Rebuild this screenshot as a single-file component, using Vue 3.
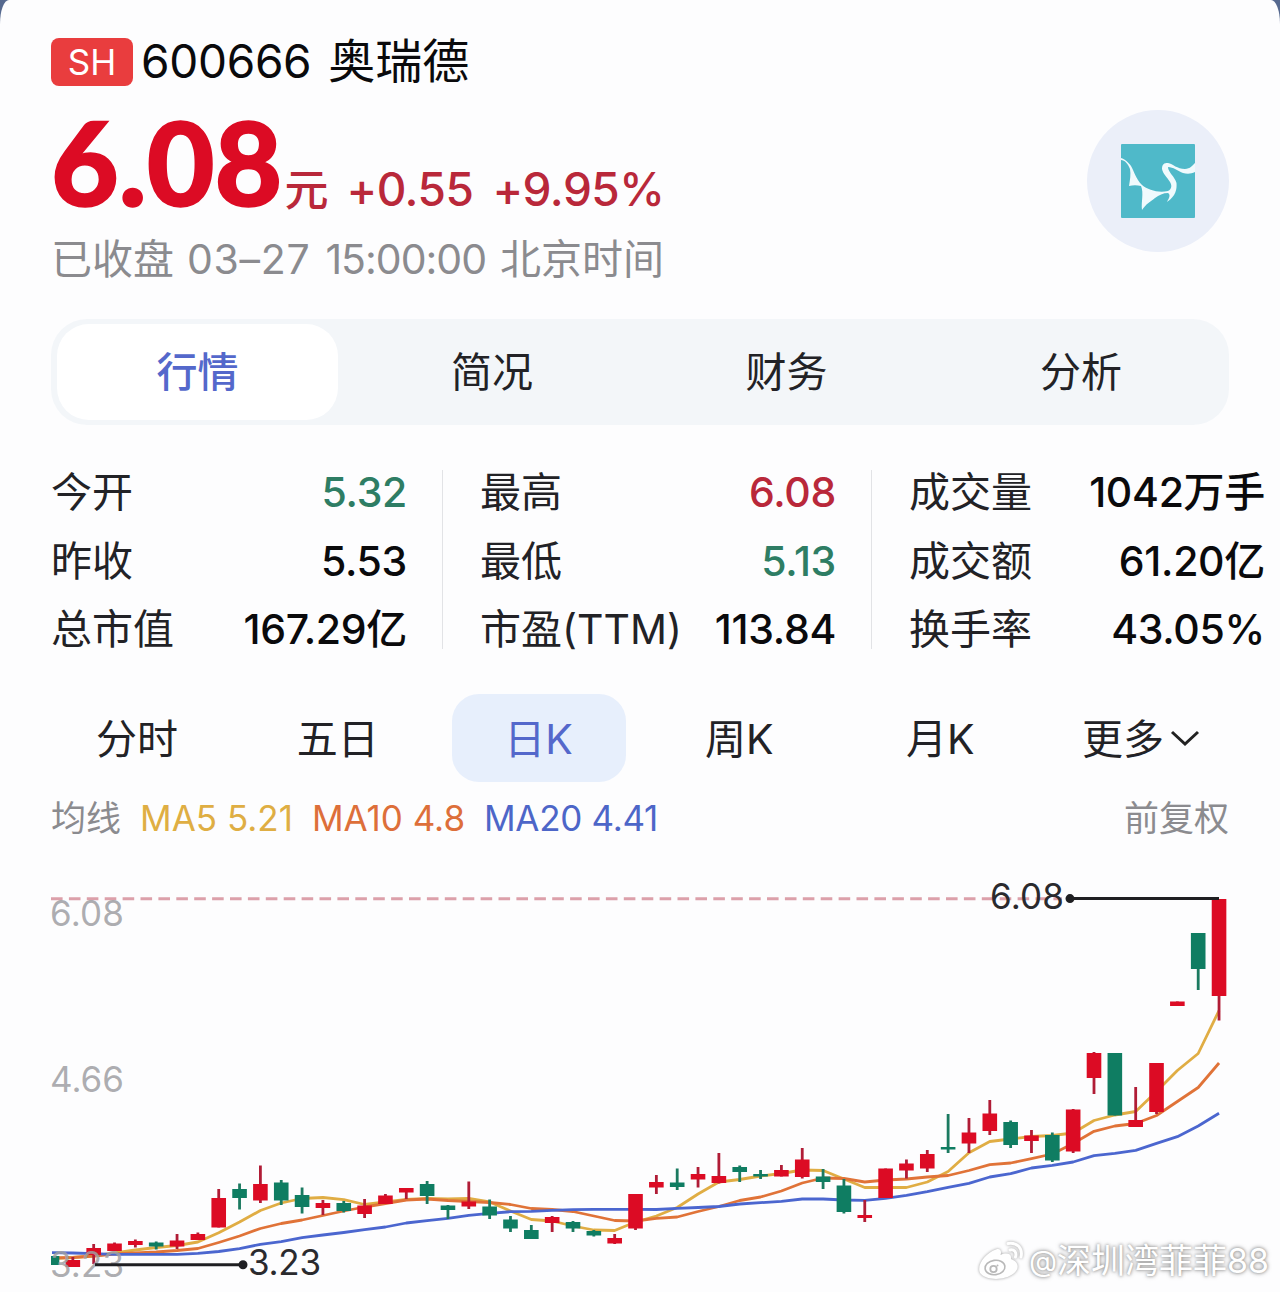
<template>
  <div class="page">
    <header class="header">
      <div class="info">
        <div class="name-row">
          <span class="badge">SH</span>
          <span class="code">600666</span>
          <span class="name">奥瑞德</span>
        </div>
        <div class="price-row">
          <span class="price">6.08</span>
          <span class="unit">元</span>
          <span class="change">+0.55</span>
          <span class="percent">+9.95%</span>
        </div>
        <div class="time-row">
          <span>已收盘</span>
          <span class="date">03–27</span>
          <span class="clock">15:00:00</span>
          <span>北京时间</span>
        </div>
      </div>
      <div class="logo">
        <svg width="74" height="74" viewBox="0 0 74 74">
          <rect width="74" height="74" rx="1" fill="#4fb9c9" />
          <path
            fill="#f0fafd"
            d="M0 14 C4 15 8 19 10 22 C13 27 15 35 21 41 C27 46 37 49 47 47 C51 45 51 41 49 38 C46 33 42 30 41 25 C41 20 43 19 47 19 C52 20 56 25 64 25 C69 25 72 21 74 19 V28 C70 30 66 30 62 29 C57 27 52 23 47 23 C47 28 54 33 55.5 39 C56 45 55 52 46 58 C48 54 50 51 47 49 C42 49 38 51 34 54 C29 58 25 60 21 66 C20 58 23 49 20 42 C16 41 12 41 8 42 C9 36 10 30 9 25 C7 20 4 16 0 16 Z"
          />
        </svg>
      </div>
    </header>

    <nav class="tabs">
      <button
        v-for="t in tabs"
        :key="t"
        class="tab"
        :class="{ active: t === tab }"
        @click="tab = t"
      >{{ t }}</button>
    </nav>

    <section class="stats">
      <div v-for="(col, i) in stats" :key="i" class="stats-col">
        <div v-for="s in col" :key="s.label" class="stat">
          <span class="label">{{ s.label }}</span>
          <span class="value" :class="s.trend">{{ s.value }}</span>
        </div>
      </div>
    </section>

    <nav class="periods">
      <button
        v-for="p in periods"
        :key="p"
        class="period"
        :class="{ active: p === period }"
        @click="period = p"
      >
        {{ p }}<svg v-if="p === '更多'" class="arrow" width="30" height="20" viewBox="0 0 30 20">
          <path d="M2 4 L15 16 L28 4" fill="none" stroke="#222" stroke-width="3" />
        </svg>
      </button>
    </nav>

    <div class="ma-row">
      <span class="gray">均线</span>
      <span class="ma ma5">MA5 5.21</span>
      <span class="ma ma10">MA10 4.8</span>
      <span class="ma ma20">MA20 4.41</span>
      <span class="gray adjust">前复权</span>
    </div>

    <div class="chart">
      <svg width="1280" height="432" viewBox="0 860 1280 432">
        <defs>
          <clipPath id="plot"><rect x="51" y="860" width="1180" height="432" /></clipPath>
        </defs>
        <line x1="51" x2="1062" y1="898.7" y2="898.7" stroke="#dca0aa" stroke-width="3" stroke-dasharray="11.6 6.3" />
        <g clip-path="url(#plot)">
          <polyline v-for="l in lines" :key="l.color" :points="toPoints(l.data)" fill="none" :stroke="l.color" stroke-width="2.8" stroke-linejoin="round" />
          <g v-for="(c, i) in candles" :key="i" :fill="c[0] ? '#dc0b24' : '#0f7d62'">
            <rect :x="cx(i) - 1.4" :y="c[1]" width="2.8" :height="c[4] - c[1]" :fill="c[0] ? '#b01c36' : '#1b7a60'" />
            <rect :x="cx(i) - 7.3" :y="c[2]" width="14.6" :height="c[3] - c[2]" />
          </g>
        </g>
        <g class="axis">
          <text x="50" y="925.5" textLength="74">6.08</text>
          <text x="50" y="1091.5" textLength="74">4.66</text>
          <text x="50" y="1277" textLength="74">3.23</text>
        </g>
        <g stroke="#1f1f22" stroke-width="3" fill="#1f1f22">
          <line x1="1070" x2="1219" y1="898.6" y2="898.6" />
          <circle cx="1070" cy="898.6" r="3" />
          <line x1="95" x2="243" y1="1264.8" y2="1264.8" />
          <circle cx="243" cy="1264.8" r="3" />
        </g>
        <g class="mark">
          <text x="990" y="909" textLength="74">6.08</text>
          <text x="248" y="1275" textLength="73">3.23</text>
        </g>
      </svg>

      <div class="watermark">
        <svg width="48" height="42" viewBox="0 0 48 42">
          <path fill="#fff" d="M19 9.5 C23 8 25 11 23.5 15 C29 12.5 35 13 34 19 C42 22 43 29 36 34 C28 40 11 41 4 34 C-2 27 8 13 19 9.5 Z" />
          <ellipse cx="18" cy="27.5" rx="10" ry="7.2" fill="#fff" stroke="#b9b9b9" stroke-width="1.6" transform="rotate(-8 18 27.5)" />
          <circle cx="16.5" cy="29" r="3.2" fill="#fff" stroke="#b9b9b9" stroke-width="1.8" />
          <circle cx="20.5" cy="25.5" r="1" fill="#b9b9b9" />
          <path d="M33 10 C37 9 40 12 38.5 17 M31 3.5 C40 2 46 8 44 17" fill="none" stroke="#fff" stroke-width="3" stroke-linecap="round" />
        </svg>
        <span class="at">@</span><span>深圳湾菲菲88</span>
      </div>
    </div>
  </div>
</template>

<script setup>
import { ref } from "vue";

const tabs = ["行情", "简况", "财务", "分析"];
const tab = ref("行情");

const periods = ["分时", "五日", "日K", "周K", "月K", "更多"];
const period = ref("日K");

const stats = [
  [
    { label: "今开", value: "5.32", trend: "down" },
    { label: "昨收", value: "5.53" },
    { label: "总市值", value: "167.29亿" },
  ],
  [
    { label: "最高", value: "6.08", trend: "up" },
    { label: "最低", value: "5.13", trend: "down" },
    { label: "市盈(TTM)", value: "113.84" },
  ],
  [
    { label: "成交量", value: "1042万手" },
    { label: "成交额", value: "61.20亿" },
    { label: "换手率", value: "43.05%" },
  ],
];

// [rising, high, body top, body bottom, low]
const candles = [
  [0, 1256, 1256, 1265, 1265],
  [1, 1257, 1260, 1267, 1267],
  [1, 1244, 1248, 1255, 1264],
  [1, 1242.5, 1243.5, 1251, 1251],
  [1, 1239.5, 1241, 1245, 1247.5],
  [0, 1241.5, 1242.5, 1246.5, 1249.5],
  [1, 1234, 1240.5, 1246.5, 1249],
  [1, 1232.5, 1234, 1240, 1240],
  [1, 1189, 1198, 1227.5, 1227.5],
  [0, 1183.5, 1189, 1198, 1209.5],
  [1, 1165.5, 1184, 1200.5, 1203],
  [0, 1180, 1182.5, 1200.5, 1205],
  [0, 1187.5, 1195, 1207, 1213.5],
  [1, 1200, 1203, 1208, 1215],
  [0, 1201, 1203, 1211, 1212.5],
  [1, 1199, 1205.5, 1214, 1218],
  [1, 1194, 1195.5, 1204, 1204],
  [1, 1188, 1188, 1192.5, 1199],
  [0, 1181, 1184, 1196, 1204],
  [0, 1205, 1205.5, 1210, 1219],
  [1, 1181.5, 1201.5, 1206.5, 1209],
  [0, 1199.5, 1206.5, 1215.5, 1219],
  [0, 1216, 1219.5, 1228.5, 1232],
  [0, 1225, 1230, 1239, 1239],
  [1, 1216, 1217, 1223, 1232],
  [0, 1221, 1222, 1228.5, 1232],
  [0, 1230, 1231, 1235.5, 1236.5],
  [1, 1234, 1238, 1243.5, 1244],
  [1, 1194, 1194, 1228.5, 1230],
  [1, 1175, 1182, 1187.5, 1194],
  [0, 1168.5, 1182.5, 1187, 1190],
  [1, 1167, 1174, 1179.5, 1187.5],
  [1, 1153, 1176, 1183, 1183.5],
  [0, 1165.5, 1167, 1172, 1182],
  [0, 1170, 1174, 1176.5, 1179],
  [1, 1165, 1170, 1176.5, 1176.5],
  [1, 1148, 1159.5, 1177, 1178.5],
  [0, 1169, 1176.5, 1182, 1189],
  [0, 1179, 1185.5, 1212, 1213.5],
  [1, 1200, 1215, 1218, 1222],
  [1, 1168.5, 1168.5, 1198, 1198],
  [1, 1159.5, 1163.5, 1170.5, 1178.5],
  [1, 1150, 1154, 1168.5, 1172],
  [0, 1114, 1147, 1149.5, 1153],
  [1, 1118, 1132.5, 1143.5, 1153],
  [1, 1100, 1113.5, 1131, 1135],
  [0, 1120.5, 1122, 1145, 1148],
  [1, 1130, 1135.5, 1141, 1153],
  [0, 1132.5, 1135, 1160.5, 1162],
  [1, 1109, 1109.5, 1151.5, 1153],
  [1, 1052, 1053, 1078, 1094],
  [0, 1053, 1053, 1115.5, 1115.5],
  [1, 1087, 1120, 1127, 1127],
  [1, 1063, 1063, 1112, 1114],
  [1, 1001.5, 1001.5, 1006, 1006],
  [0, 933, 933, 969, 990],
  [1, 899, 899, 996, 1020.5],
];

const lines = [
  {
    color: "#e0ad44",
    data: [
      1258.5, 1257.5, 1256, 1253, 1250, 1247.5, 1245.5, 1242, 1232.7, 1222, 1210.5, 1203, 1198.5, 1197.5, 1199.7,
      1204.5, 1202, 1199.5, 1198.5, 1198.8, 1198.3, 1202, 1211, 1219.5, 1221, 1226, 1230, 1230.5, 1222, 1216,
      1207.5, 1194, 1182, 1179.5, 1176, 1173.5, 1170, 1170.5, 1179, 1187.5, 1187.5, 1187.5, 1182, 1171.5, 1152.7,
      1141.5, 1139, 1136.5, 1135.5, 1133, 1120.5, 1115, 1111.5, 1091.5, 1070.5, 1053.5, 1010.5,
    ],
  },
  {
    color: "#e07338",
    data: [
      1258, 1257.5, 1256, 1254, 1253, 1252, 1250.5, 1248.5, 1242.5, 1236, 1228.5, 1223.5, 1220, 1215.5, 1211,
      1207, 1203.5, 1200, 1199, 1200.5, 1201.5, 1202.5, 1204.5, 1208.5, 1209.5, 1211.5, 1216, 1220.5, 1221, 1218.3,
      1217, 1211.5, 1206.5, 1200.5, 1197, 1191, 1183, 1178, 1178.5, 1182, 1180, 1179, 1177, 1175.5, 1170.5,
      1164.7, 1163, 1158.7, 1154, 1143.5, 1131.3, 1126, 1123.5, 1115.5, 1101.5, 1087.5, 1063,
    ],
  },
  {
    color: "#4b66cf",
    data: [
      1252.7, 1253, 1253.7, 1254.3, 1254.3, 1254.3, 1254.3, 1253.3, 1251.5, 1248.7, 1244.3, 1241.7, 1237.7, 1235, 1232.5,
      1229.7, 1227, 1223, 1220.7, 1218.3, 1215.3, 1213.3, 1211.7, 1211.3, 1210.3, 1209.7, 1209.3, 1209.3, 1209.3, 1209.5,
      1208.3, 1207.5, 1206.5, 1204, 1202.7, 1201.3, 1199, 1199, 1200, 1200.3, 1198.3, 1195.3, 1191.7, 1187.3, 1183.3,
      1177, 1173.7, 1168, 1165.3, 1162, 1155.7, 1153.3, 1150.3, 1143.3, 1136.7, 1126, 1113.3,
    ],
  },
];

const cx = (i) => 52 + i * 20.84;
const toPoints = (data) => data.map((y, i) => `${cx(i)},${y}`).join(" ");
</script>

<style>
body { background:#56698f; }
</style>

<style scoped>
.page {
  box-sizing:border-box; width:1280px; height:1292px; overflow:hidden;
  display:flex; flex-direction:column;
  background:#fdfdfe; border-radius:9px 9px 0 0 / 24px 24px 0 0;
  font-family:Inter, "Noto Sans CJK SC", sans-serif; color:#222226;
}
span { white-space:nowrap; }
button { border:0; padding:0; background:none; font:inherit; color:inherit; cursor:pointer; }

.header { display:flex; justify-content:space-between; height:319px; padding:0 51px; }
.name-row { display:flex; align-items:center; height:48px; margin-top:38px; color:#0a0a0c; }
.badge {
  width:82px; height:48px; border-radius:8px; background:#e93d3e; color:#fff;
  font-size:35px; line-height:48px; text-align:center;
}
.code { margin-left:8px; padding-bottom:2px; font-size:46px; letter-spacing:-.3px; }
.name { margin-left:17px; padding-bottom:9px; font-size:47px; }
.price-row { display:flex; align-items:baseline; height:120px; line-height:120px; margin-top:15px; color:#b9283a; font-size:46px; font-weight:500; }
.price { color:#dc0b24; font-family:Lato, sans-serif; font-size:117px; font-weight:900; -webkit-text-stroke:1.5px #dc0b24; }
.unit { margin-left:2px; font-size:44px; }
.change { margin-left:18px; letter-spacing:-.5px; }
.percent { margin-left:19px; letter-spacing:-.5px; }
.time-row { display:flex; height:60px; line-height:60px; margin-top:8px; color:#8b8b8f; font-size:41px; }
.date { margin-left:13px; letter-spacing:.7px; }
.clock { margin:0 14px 0 15px; letter-spacing:-1px; }
.logo {
  display:flex; align-items:center; justify-content:center;
  width:142px; height:142px; margin-top:110px; border-radius:50%; background:#ebeff9;
}

.tabs {
  display:flex; flex:none; box-sizing:border-box; height:106px; margin:0 51px; padding:5px 6px;
  border-radius:36px; background:#f3f6f9; font-size:41px;
}
.tab { width:281px; margin-right:13.5px; border-radius:32px; line-height:94px; }
.tab:last-child { margin-right:0; }
.tab.active { background:#fff; color:#5468cb; font-weight:500; }

.stats { display:flex; flex:none; height:179px; margin:45px 16px 0 51px; }
.stats-col { width:355px; padding-right:36px; margin-right:37px; border-right:1.5px solid #e2e3e6; }
.stats-col:last-child { padding:0; margin:0; border:0; }
.stat { display:flex; justify-content:space-between; height:68.5px; line-height:44px; font-size:41px; }
.value { margin-right:-1px; color:#0a0a0c; font-weight:500; letter-spacing:-.3px; }
.value.up { color:#b9283a; }
.value.down { color:#2e7d64; }

.periods { display:flex; flex:none; justify-content:space-between; height:88px; margin:45px 52px 0 50px; }
.period { display:flex; align-items:center; justify-content:center; box-sizing:border-box; width:174px; padding-bottom:5px; border-radius:27px; font-size:41px; }
.period.active { background:#e7effc; color:#5468cb; }
.arrow { margin:5px 0 0 6px; }

.ma-row { display:flex; flex:none; align-items:center; height:72px; padding:0 51px; font-size:35px; }
.gray { padding-bottom:6px; color:#8b8b8f; }
.ma { margin-left:19px; }
.ma5 { color:#dfae43; }
.ma10 { color:#dd6f3a; }
.ma20 { color:#4d66c8; letter-spacing:-.3px; }
.adjust { margin-left:auto; }

.chart { position:relative; flex:none; height:432px; margin-top:6px; }
.chart > svg { display:block; }
.axis { fill:#9f9fa3; fill-opacity:.85; font-size:35px; }
.mark { fill:#2a2a2e; font-size:35px; }

.watermark {
  position:absolute; right:11px; bottom:7px; display:flex; align-items:center; height:48px;
  color:#fff; font-size:34px; line-height:48px;
  text-shadow:0 0 3px #8f8f8f, 0 0 5px #a5a5a5;
}
.watermark svg { margin-right:4px; filter:drop-shadow(0 0 1.5px #9c9c9c); }
.at { font-size:29px; }
</style>
